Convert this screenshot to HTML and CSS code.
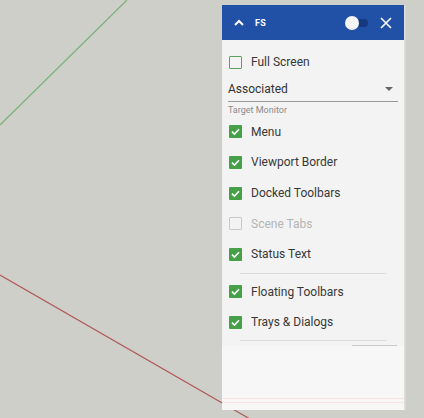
FILE: index.html
```html
<!DOCTYPE html>
<html>
<head>
<meta charset="utf-8">
<link rel="stylesheet" href="styles.css">
</head>
<body>
<div class="canvas">
  <svg class="axes" width="424" height="418" viewBox="0 0 424 418">
    <line x1="127" y1="0" x2="0" y2="125" stroke="#7db27d" stroke-width="1.3"/>
    <line x1="0" y1="275" x2="250" y2="419" stroke="#b05858" stroke-width="1.2"/>
  </svg>
  <div class="panel">
    <div class="header">
      <svg class="chev" width="10" height="7" viewBox="0 0 10 7"><path d="M1 6 L5 2 L9 6" fill="none" stroke="#fff" stroke-width="2"/></svg>
      <span class="title">FS</span>
      <span class="toggle"><span class="knob"></span></span>
      <svg class="close" width="12" height="12" viewBox="0 0 12 12"><path d="M1 1 L11 11 M11 1 L1 11" stroke="#fff" stroke-width="1.6"/></svg>
    </div>
    <div class="body">
      <div class="row first"><span class="box"></span><span class="label">Full Screen</span></div>
      <div class="select"><span>Associated</span><span class="arrow"></span></div>
      <div class="hint">Target Monitor</div>
      <div class="row"><span class="box on"><svg width="13" height="13" viewBox="0 0 13 13"><path d="M3 6.6 L5.4 9 L10 4.2" fill="none" stroke="#fff" stroke-width="1.6"/></svg></span><span class="label">Menu</span></div>
      <div class="row"><span class="box on"><svg width="13" height="13" viewBox="0 0 13 13"><path d="M3 6.6 L5.4 9 L10 4.2" fill="none" stroke="#fff" stroke-width="1.6"/></svg></span><span class="label">Viewport Border</span></div>
      <div class="row"><span class="box on"><svg width="13" height="13" viewBox="0 0 13 13"><path d="M3 6.6 L5.4 9 L10 4.2" fill="none" stroke="#fff" stroke-width="1.6"/></svg></span><span class="label">Docked Toolbars</span></div>
      <div class="row disabled"><span class="box"></span><span class="label">Scene Tabs</span></div>
      <div class="row"><span class="box on"><svg width="13" height="13" viewBox="0 0 13 13"><path d="M3 6.6 L5.4 9 L10 4.2" fill="none" stroke="#fff" stroke-width="1.6"/></svg></span><span class="label">Status Text</span></div>
      <div class="sep"></div>
      <div class="row"><span class="box on"><svg width="13" height="13" viewBox="0 0 13 13"><path d="M3 6.6 L5.4 9 L10 4.2" fill="none" stroke="#fff" stroke-width="1.6"/></svg></span><span class="label">Floating Toolbars</span></div>
      <div class="row"><span class="box on"><svg width="13" height="13" viewBox="0 0 13 13"><path d="M3 6.6 L5.4 9 L10 4.2" fill="none" stroke="#fff" stroke-width="1.6"/></svg></span><span class="label">Trays &amp; Dialogs</span></div>
      <div class="sep sep2"></div>
      <div class="slider"></div>
      <div class="rest">
        <div class="pink"></div>
        <div class="pink"></div>
      </div>
    </div>
  </div>
</div>
</body>
</html>
```
FILE: styles.css
```css
html, body {
  margin: 0;
  padding: 0;
}
body {
  width: 424px;
  height: 418px;
  overflow: hidden;
  background: #cfcfca;
  font-family: Roboto, "Liberation Sans", sans-serif;
}
.canvas {
  position: relative;
  width: 424px;
  height: 418px;
}
.axes {
  position: absolute;
  left: 0;
  top: 0;
}
.panel {
  position: absolute;
  left: 222px;
  top: 5px;
  width: 182px;
  height: 405px;
  background: #f3f3f3;
  box-shadow: 1px 0 0 #dedede, 2px 0 0 #d6d6d2;
  display: flex;
  flex-direction: column;
}
.header {
  height: 35px;
  background: #2151a7;
  display: flex;
  align-items: center;
  padding: 0 12px 0 12px;
  color: #fff;
}
.title {
  font-size: 9px;
  font-weight: 700;
  margin-left: 11px;
  letter-spacing: 0.2px;
}
.toggle {
  margin-left: auto;
  width: 20px;
  height: 8px;
  border-radius: 4px;
  background: #153a80;
  position: relative;
  margin-right: 12px;
}
.knob {
  position: absolute;
  left: -3px;
  top: -3px;
  width: 14px;
  height: 14px;
  border-radius: 50%;
  background: #f6f6f6;
}
.close {
  display: block;
}
.body {
  flex: 1;
  display: flex;
  flex-direction: column;
  padding: 0 6px;
}
.row {
  height: 30.6px;
  display: flex;
  align-items: center;
  padding-left: 1px;
}
.row.first {
  margin-top: 7px;
}
.box {
  width: 11px;
  height: 11px;
  border: 1px solid #5aa35a;
  border-radius: 1px;
  margin-right: 9px;
  display: flex;
}
.box.on {
  width: 13px;
  height: 13px;
  border: none;
  background: #45a047;
}
.disabled .box {
  border-color: #c8c8c8;
}
.label {
  font-size: 12px;
  color: #383838;
}
.disabled .label {
  color: #b4b4b4;
}
.select {
  height: 23px;
  border-bottom: 1px solid #9a9a9a;
  display: flex;
  align-items: center;
  font-size: 12px;
  color: #333;
}
.arrow {
  margin-left: auto;
  margin-right: 5px;
  width: 0;
  height: 0;
  border-left: 4px solid transparent;
  border-right: 4px solid transparent;
  border-top: 4px solid #666;
}
.hint {
  font-size: 9px;
  color: #8a8a8a;
  margin-top: 3px;
  margin-bottom: 1px;
  height: 11px;
  line-height: 11px;
}
.sep {
  height: 1px;
  background: #dcdcdc;
  margin: 3px 12px 3px 12px;
}
.sep2 {
  margin-top: 2px;
  margin-bottom: 0;
}
.slider {
  height: 1px;
  background: #c9c9cc;
  margin: 4px 1px 0 124px;
}
.rest {
  flex: 1;
  background: #f7f7f7;
  margin: 0 -6px;
  display: flex;
  flex-direction: column;
  justify-content: flex-end;
  padding-bottom: 7px;
  gap: 3px;
}
.pink {
  height: 1px;
  background: #f8e2e4;
}
```
